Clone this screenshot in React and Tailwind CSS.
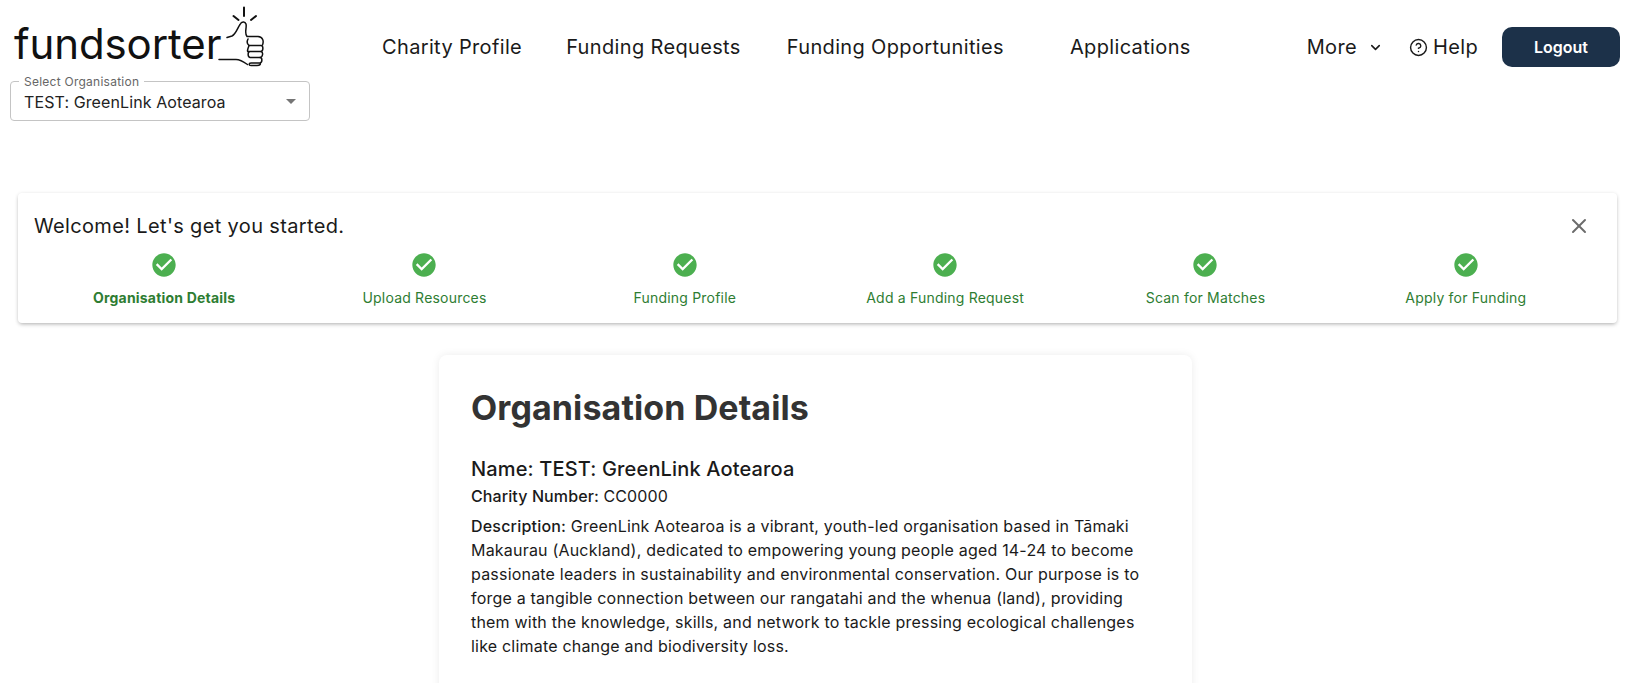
import React from 'react';
import { ChevronDown, CircleHelp, X } from 'lucide-react';

const NAV = [
  { label: 'Charity Profile', cls: 'ml-0' },
  { label: 'Funding Requests', cls: 'ml-[44px]' },
  { label: 'Funding Opportunities', cls: 'ml-[46px]' },
  { label: 'Applications', cls: 'ml-[66px]' },
];

const STEPS = [
  'Organisation Details',
  'Upload Resources',
  'Funding Profile',
  'Add a Funding Request',
  'Scan for Matches',
  'Apply for Funding',
];

const Thumb = () => (
  <svg className="-ml-[3px]" width="50" height="70" viewBox="218 0 50 70" fill="none" stroke="#111" strokeWidth="1.5" strokeLinecap="round" strokeLinejoin="round">
    <path d="M244 7.5V16M233.5 16l5 4M256 16l-5 4" strokeWidth="2" />
    <path d="M227 37.5L232 36C236 34 238 27 240 24.5C241.5 21.5 245 21 246 24C247 28 244 33 247 36.5L258 36.5C263 37 264 41 262.5 45" />
    <path d="M219 59.5H236C240 59.5 244 62 247.5 64.5" />
    <path d="M248 39C247 41 247 44 249 45.5H261C263.5 45.5 263.5 51 261 51.5H250C247.5 51.5 247.5 57 250 57.5H260C262.5 57.5 262.5 62.5 260 63H251C248.5 63 248.5 65.5 251 65.5H257C260 65.5 261 64 260 63" />
    <path d="M249 51.5C247 52 247 51 249 45.5M261 51.5C263.5 52 263 57 260 57.5" />
  </svg>
);

const Logo = () => (
  <div className="flex items-start h-[70px]">
    <span className="mt-[19px] pl-[4px] text-[42px] leading-[50px] tracking-[-0.1px] text-[#111]">fundsorter</span>
    <Thumb />
  </div>
);

const Step = ({ label, active }) => (
  <div className="flex flex-col items-center">
    <svg width="28" height="28" viewBox="0 0 24 24" fill="#4caf50">
      <path d="M12 2C6.48 2 2 6.48 2 12s4.48 10 10 10 10-4.48 10-10S17.52 2 12 2zm-2 15l-5-5 1.41-1.41L10 14.17l7.59-7.59L19 8l-9 9z" />
    </svg>
    <span className={`mt-[9px] text-[14px] leading-5 tracking-[0.2px] text-[#2e7d32] ${active ? 'font-bold' : 'font-normal'}`}>{label}</span>
  </div>
);

export default function App() {
  return (
    <div className="h-[683px] overflow-hidden bg-white font-['Inter',sans-serif] text-[#1a1a1a]">
      {/* Header */}
      <div className="flex items-start">
        <div className="w-[382px] pl-[10px] shrink-0">
          <Logo />
          <fieldset className="mt-[6px] w-[300px] h-[45px] border border-[#c4c4c4] rounded-[4px] px-[8px]">
            <legend className="px-[5px] text-[12px] leading-[11px] tracking-[0.25px] text-[#666]">Select Organisation</legend>
            <div className="flex items-center justify-between px-[5px] h-[29px]">
              <span className="text-[16px] tracking-[0.1px] text-[#222]">TEST: GreenLink Aotearoa</span>
              <span className="w-0 h-0 border-x-[5px] border-x-transparent border-t-[5px] border-t-[#757575]" />
            </div>
          </fieldset>
        </div>
        <nav className="flex items-center h-[40px] mt-[27px] text-[20px] tracking-[0.35px]">
          {NAV.map((n) => (
            <span key={n.label} className={n.cls}>{n.label}</span>
          ))}
        </nav>
        <div className="ml-auto mr-[15px] mt-[27px] h-[40px] flex items-center text-[20px] tracking-[0.35px]">
          <span>More</span>
          <ChevronDown size={15} className="ml-[11px]" strokeWidth={2.5} />
          <CircleHelp size={19} className="ml-[26px]" strokeWidth={1.8} />
          <span className="ml-[5px]">Help</span>
          <button className="ml-[24px] w-[118px] h-[40px] rounded-[10px] bg-[#1c3149] text-white text-[16px] tracking-normal font-semibold">Logout</button>
        </div>
      </div>

      {/* Welcome banner */}
      <div className="mt-[72px] mx-[18px] h-[130px] rounded-[4px] bg-white shadow-[0_2px_4px_-1px_rgba(0,0,0,0.3),0_0_4px_rgba(0,0,0,0.06)] px-[16px] pt-[20px]">
        <div className="flex items-center justify-between h-[26px]">
          <span className="text-[20px] tracking-[0.35px]">Welcome! Let's get you started.</span>
          <X size={24} className="text-[#6b6b6b] mr-[10px]" strokeWidth={2} />
        </div>
        <div className="grid grid-cols-6 w-[1562px] mt-[12px]">
          {STEPS.map((s, i) => (
            <Step key={s} label={s} active={i === 0} />
          ))}
        </div>
      </div>

      {/* Details card */}
      <div className="mt-[32px] ml-[439px] w-[753px] rounded-[8px] bg-white shadow-[0_0_8px_rgba(0,0,0,0.08)] pl-[32px] pr-[33px] pt-[31px] pb-16">
        <h1 className="text-[34px] leading-[44px] tracking-[0.1px] font-bold text-[#333]">Organisation Details</h1>
        <h2 className="mt-[25px] text-[20px] leading-[28px] tracking-[0.15px] font-medium">Name: TEST: GreenLink Aotearoa</h2>
        <p className="mt-[1px] text-[16px] leading-[24px] tracking-[0.1px]"><span className="font-medium">Charity Number:</span> CC0000</p>
        <p className="mt-[6px] text-[16px] leading-[24px] tracking-[0.2px]">
          <span className="font-medium">Description:</span> GreenLink Aotearoa is a vibrant, youth-led organisation based in Tāmaki Makaurau (Auckland), dedicated to empowering young people aged 14-24 to become passionate leaders in sustainability and environmental conservation. Our purpose is to forge a tangible connection between our rangatahi and the whenua (land), providing them with the knowledge, skills, and network to tackle pressing ecological challenges like climate change and biodiversity loss.
        </p>
      </div>
    </div>
  );
}
